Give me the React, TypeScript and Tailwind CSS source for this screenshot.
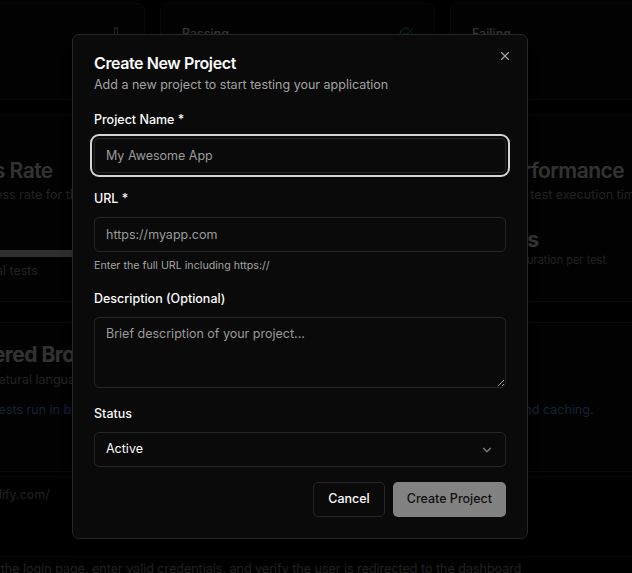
import React from "react";
import { X, ChevronDown, CircleCheckBig, TestTube, XCircle } from "lucide-react";

function StatCard({ title, icon, value }: { title: string; icon: React.ReactNode; value: string }) {
  return (
    <div className="h-[97px] w-[275px] shrink-0 rounded-[7px] border border-[#2e2e2e] bg-[#0a0a0a] px-[21px] pt-[21px]">
      <div className="flex h-[18px] items-center justify-between">
        <span className="text-[12.5px] font-medium leading-[18px] text-[#fafafa]">{title}</span>
        {icon}
      </div>
      <div className="mt-[6px] text-[21px] font-bold leading-[28px] text-[#fafafa]">{value}</div>
    </div>
  );
}

function Field({ label, children }: { label: string; children: React.ReactNode }) {
  return (
    <div className="flex flex-col gap-[9px]">
      <label className="text-[12.5px] font-medium leading-[18px] text-[#fafafa]">{label}</label>
      {children}
    </div>
  );
}

export default function App() {
  return (
    <div className="relative h-[573px] w-[632px] overflow-hidden bg-black font-['Inter',sans-serif]">
      {/* Background dashboard */}
      <div className="flex flex-col">
        <div className="ml-[-130px] mt-[3px] flex gap-[15px]">
          <StatCard title="Total Tests" icon={<TestTube size={14} className="text-[#a3a3a3]" />} value="100" />
          <StatCard title="Passing" icon={<CircleCheckBig size={14} className="text-[#22c55e]" />} value="87" />
          <StatCard title="Failing" icon={<XCircle size={14} className="text-[#ef4444]" />} value="13" />
        </div>

        <div className="ml-[-100px] mt-[15px] flex gap-[15px]">
          <div className="h-[187px] w-[561px] shrink-0 rounded-[7px] border border-[#2e2e2e] bg-[#0a0a0a] px-[21px] pt-[44px]">
            <div className="text-[21px] font-semibold leading-[21px] tracking-tight text-[#fafafa]">Success Rate</div>
            <div className="mt-[5px] text-[12.5px] leading-[18px] text-[#a3a3a3]">Overall success rate for the last 7 days</div>
            <div className="mt-[12px] text-[21px] font-bold leading-[24px] text-[#fafafa]">87.0%</div>
            <div className="mt-[10px] h-[7px] w-full rounded-full bg-[#262626]">
              <div className="h-full w-[87%] rounded-full bg-[#e5e5e5]" />
            </div>
            <div className="mt-[5px] text-[12.5px] leading-[18px] text-[#a3a3a3]">87 of 100 total tests</div>
          </div>
          <div className="h-[187px] w-[561px] shrink-0 rounded-[7px] border border-[#2e2e2e] bg-[#0a0a0a] px-[21px] pt-[44px]">
            <div className="text-[21px] font-semibold leading-[21px] tracking-tight text-[#fafafa]">Performance</div>
            <div className="mt-[5px] text-[12.5px] leading-[18px] text-[#a3a3a3]">Total test execution time and trends</div>
            <div className="mt-[24px] text-[21px] font-bold leading-[24px] text-[#fafafa]">1.8s</div>
            <div className="text-[11px] leading-[16px] text-[#a3a3a3]">Est. duration per test</div>
          </div>
        </div>

        <div className="ml-[-101px] mt-[20px] h-[150px] w-[800px] shrink-0 rounded-[7px] border border-[#2e2e2e] bg-[#0a0a0a] px-[21px] pt-[21px]">
          <div className="text-[21px] font-bold leading-[21px] tracking-tight text-[#fafafa]">AI-Powered Browser Testing</div>
          <div className="mt-[6px] text-[12.5px] leading-[18px] text-[#a3a3a3]">Describe in natural language and let AI run the tests for you</div>
          <div className="mt-[12px] text-[12.5px] leading-[18px] text-[#60a5fa]">And all your tests run in background workers with smart retries, screenshots, logs, parallel execution and caching.</div>
        </div>

        <div className="ml-[-91px] mt-[4px] h-[80px] w-[800px] shrink-0 border-t border-[#2e2e2e] pl-[29px] pr-[21px] pt-[9px]">
          <div className="text-[12.5px] leading-[18px] text-[#a3a3a3]">https://netlify.com/</div>
        </div>

        <div className="ml-[-91px] w-[800px] shrink-0 border-t border-[#2e2e2e] px-[21px] pt-[3px]">
          <div className="text-[12.5px] leading-[18px] text-[#a3a3a3]">Navigate to the login page, enter valid credentials, and verify the user is redirected to the dashboard</div>
        </div>
      </div>

      {/* Overlay */}
      <div className="absolute inset-0 bg-black/80" />

      {/* Dialog */}
      <div className="absolute left-[72px] top-[34px] w-[456px] rounded-[7px] border border-[#262626] bg-[#0a0a0a] px-[21px] pb-[21px] pt-[20px] shadow-lg">
        <button className="absolute right-[15px] top-[14px] flex h-[14px] w-[14px] items-center justify-center text-[#c4c4c4] opacity-80">
          <X size={14} strokeWidth={2} />
        </button>
        <div className="flex flex-col gap-[5px]">
          <h2 className="text-[16px] font-semibold leading-[16px] tracking-tight text-[#fafafa]">Create New Project</h2>
          <p className="text-[12.5px] leading-[18px] text-[#a3a3a3]">Add a new project to start testing your application</p>
        </div>

        <div className="mt-[17px] flex flex-col gap-[17px]">
          <Field label="Project Name *">
            <input
              className="h-[35px] w-full rounded-[5px] border border-[#262626] bg-[#0a0a0a] px-[11px] text-[12.5px] text-[#fafafa] outline-none ring-2 ring-[#d4d4d4] ring-offset-2 ring-offset-[#0a0a0a] placeholder:text-[#9a9a9a]"
              placeholder="My Awesome App"
            />
          </Field>
          <div className="flex flex-col gap-[7px]">
            <Field label="URL *">
              <input
                className="h-[35px] w-full rounded-[5px] border border-[#262626] bg-[#0a0a0a] px-[11px] text-[12.5px] text-[#fafafa] outline-none placeholder:text-[#9a9a9a]"
                placeholder="https://myapp.com"
              />
            </Field>
            <p className="text-[10.7px] leading-[14px] text-[#a3a3a3]">Enter the full URL including https://</p>
          </div>
          <Field label="Description (Optional)">
            <textarea
              className="h-[71px] w-full rounded-[5px] border border-[#262626] bg-[#0a0a0a] px-[11px] py-[7px] text-[12.5px] leading-[18px] text-[#fafafa] outline-none placeholder:text-[#9a9a9a]"
              placeholder="Brief description of your project..."
            />
          </Field>
          <Field label="Status">
            <div className="flex h-[35px] w-full items-center justify-between rounded-[5px] border border-[#262626] bg-[#0a0a0a] px-[11px] text-[12.5px] text-[#fafafa]">
              <span>Active</span>
              <ChevronDown size={14} className="opacity-50" />
            </div>
          </Field>
        </div>

        <div className="mt-[15px] flex justify-end gap-[8px]">
          <button className="h-[35px] rounded-[5px] border border-[#262626] bg-[#0a0a0a] px-[14px] text-[12.5px] font-medium text-[#fafafa]">
            Cancel
          </button>
          <button className="h-[35px] rounded-[5px] bg-[#fafafa] px-[14px] text-[12.5px] font-medium text-[#171717] opacity-50">
            Create Project
          </button>
        </div>
      </div>
    </div>
  );
}
